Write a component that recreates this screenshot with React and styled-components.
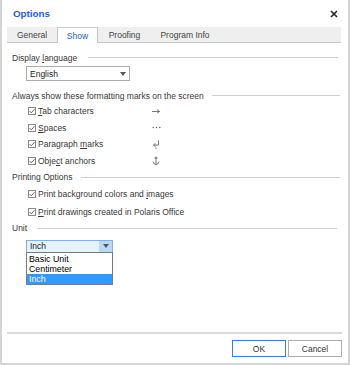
import styled, { createGlobalStyle } from "styled-components"

const Global = createGlobalStyle`
body{
  margin:0;
  background:#fff;
  font-family:"Liberation Sans",Arial,sans-serif;
}
`

const Window = styled.div`
width:350px;
height:365px;
box-sizing:border-box;
background:#fff;
border-left:2px solid #d4d4d4;
border-right:2px solid #d4d4d4;
border-bottom:2px solid #d4d4d4;
display:flex;
flex-direction:column;
color:#383838;
font-size:8.5px;
`
const TitleBar = styled.div`
height:27px;
display:flex;
align-items:center;
justify-content:space-between;
padding:0 10px 0 11px;
`
const Title = styled.span`
color:#1d62c8;
font-weight:bold;
font-size:9.8px;
`
const TabBar = styled.div`
margin:0 7px 0 5px;
height:15px;
background:#efefef;
border-bottom:1px solid #c8c8c8;
display:flex;
align-items:stretch;
`
const Tab = styled.div`
width:${p=>p.w}px;
display:flex;
align-items:center;
justify-content:center;
box-sizing:border-box;
color:${p=>p.active?"#1d62c8":"#444"};
background:${p=>p.active?"#fff":"transparent"};
border:${p=>p.active?"1px solid #c8c8c8":"1px solid transparent"};
border-bottom:none;
margin-bottom:${p=>p.active?"-1px":"0"};
`
const Content = styled.div`
padding:0 8px 0 10px;
display:flex;
flex-direction:column;
`
const Section = styled.div`
display:flex;
align-items:center;
gap:${p=>p.gap}px;
height:17px;
margin-top:${p=>p.top}px;
padding-right:${p=>p.right}px;
`
const Line = styled.div`
flex:1;
border-top:1px solid #cfcfcf;
`
const Select = styled.div`
width:${p=>p.w}px;
height:${p=>p.hover?"13px":"15px"};
box-sizing:border-box;
border:1px solid ${p=>p.hover?"#7eb4ea":"#acacac"};
background:${p=>p.hover?"#e5f1fb":"#fff"};
margin-left:14px;
display:flex;
align-items:center;
justify-content:space-between;
padding-left:3px;
color:#222;
`
const Arrow = styled.div`
width:${p=>p.hover?"13px":"12px"};
height:100%;
display:flex;
align-items:center;
justify-content:center;
background:${p=>p.hover?"#bcd9f4":"transparent"};
&::after{
  content:"";
  border-left:3.5px solid transparent;
  border-right:3.5px solid transparent;
  border-top:4px solid #555;
}
`
const Checks = styled.div`
display:flex;
flex-direction:column;
padding-left:16px;
margin-top:${p=>p.top}px;
gap:${p=>p.gap}px;
`
const CheckRow = styled.div`
display:flex;
align-items:center;
height:12px;
`
const Box = styled.span`
width:8px;
height:8px;
box-sizing:border-box;
border:1px solid #8a8a8a;
margin-right:2px;
display:flex;
align-items:center;
justify-content:center;
`
const Label = styled.span`
width:${p=>p.w?p.w+"px":"auto"};
white-space:nowrap;
`
const Mark = styled.span`
width:12px;
display:flex;
justify-content:center;
`
const Key = styled.span`
text-decoration:underline;
`
const UnitWrap = styled.div`
position:relative;
margin-top:3px;
height:13px;
`
const List = styled.div`
position:absolute;
left:14px;
top:12px;
width:87px;
box-sizing:border-box;
border:1px solid #7a7a7a;
background:#fff;
font-size:8.8px;
color:#000;
padding-top:1px;
`
const Item = styled.div`
height:10px;
line-height:10px;
padding-left:2px;
background:${p=>p.sel?"#3399ff":"transparent"};
color:${p=>p.sel?"#fff":"#000"};
`
const Spacer = styled.div`
flex:1;
`
const Footer = styled.div`
margin:0 6px 0 5px;
border-top:2px solid #dadada;
height:29px;
display:flex;
align-items:center;
justify-content:flex-end;
gap:2px;
`
const Button = styled.div`
width:54px;
height:17px;
box-sizing:border-box;
border:1px solid ${p=>p.primary?"#3c7fd1":"#adadad"};
display:flex;
align-items:center;
justify-content:center;
color:#333;
`

const CloseIcon = () => (
  <svg width="8" height="8" viewBox="0 0 8 8">
    <path d="M1 1 L7 7 M7 1 L1 7" stroke="#222" strokeWidth="1.6"/>
  </svg>
)

const Check = () => (
  <Box>
    <svg width="6" height="6" viewBox="0 0 6 6">
      <path d="M0.5 3 L2.3 4.8 L5.5 1.2" fill="none" stroke="#555" strokeWidth="0.9"/>
    </svg>
  </Box>
)

const TabMark = () => (
  <svg width="8" height="5" viewBox="0 0 8 5">
    <path d="M0 2.5 H7.5 M5 0.7 L7.5 2.5 L5 4.3" fill="none" stroke="#555" strokeWidth="0.8"/>
  </svg>
)
const SpaceMark = () => (
  <svg width="9" height="3" viewBox="0 0 9 3">
    <circle cx="1.2" cy="1.5" r="0.7" fill="#555"/>
    <circle cx="4.5" cy="1.5" r="0.7" fill="#555"/>
    <circle cx="7.8" cy="1.5" r="0.7" fill="#555"/>
  </svg>
)
const ParaMark = () => (
  <svg width="8" height="9" viewBox="0 0 8 9">
    <path d="M6.5 0.5 V5 H1.5 M3.3 3.2 L1.5 5 L3.3 6.8" fill="none" stroke="#555" strokeWidth="0.8"/>
    <circle cx="4" cy="8.2" r="0.6" fill="#555"/>
  </svg>
)
const AnchorMark = () => (
  <svg width="8" height="9" viewBox="0 0 8 9">
    <path d="M4 0.5 V8.5 M2.3 2 H5.7 M1 5.5 Q1.5 8.5 4 8.5 Q6.5 8.5 7 5.5" fill="none" stroke="#555" strokeWidth="0.8"/>
  </svg>
)

const marks = [
  {label:<><Key>T</Key>ab characters</>, mark:<TabMark/>},
  {label:<><Key>S</Key>paces</>, mark:<SpaceMark/>},
  {label:<>Paragraph <Key>m</Key>arks</>, mark:<ParaMark/>},
  {label:<>Obje<Key>c</Key>t anchors</>, mark:<AnchorMark/>},
]

const App = () => {
  return (
    <Window>
      <Global/>
      <TitleBar>
        <Title>Options</Title>
        <CloseIcon/>
      </TitleBar>
      <TabBar>
        <Tab w={50}>General</Tab>
        <Tab w={41} active>Show</Tab>
        <Tab w={53}>Proofing</Tab>
        <Tab w={68}>Program Info</Tab>
      </TabBar>
      <Content>
        <Section top={6} right={2} gap={11}>
          <span>Display <Key>l</Key>anguage</span>
          <Line/>
        </Section>
        <Select w={104}>
          <span>English</span>
          <Arrow/>
        </Select>
        <Section top={6} right={0} gap={8}>
          <span>Always show these formatting marks on the screen</span>
          <Line/>
        </Section>
        <Checks top={1} gap={4.5}>
          {marks.map((m,i)=>(
            <CheckRow key={i}>
              <Check/>
              <Label w={112}>{m.label}</Label>
              <Mark>{m.mark}</Mark>
            </CheckRow>
          ))}
        </Checks>
        <Section top={2} right={0} gap={9}>
          <span>Printing Options</span>
          <Line/>
        </Section>
        <Checks top={2} gap={6}>
          <CheckRow>
            <Check/>
            <Label>Print background colors and <Key>i</Key>mages</Label>
          </CheckRow>
          <CheckRow>
            <Check/>
            <Label><Key>P</Key>rint drawings created in Polaris Office</Label>
          </CheckRow>
        </Checks>
        <Section top={2} right={3} gap={10}>
          <span>Unit</span>
          <Line/>
        </Section>
        <UnitWrap>
          <Select w={87} hover>
            <span>Inch</span>
            <Arrow hover/>
          </Select>
          <List>
            <Item>Basic Unit</Item>
            <Item>Centimeter</Item>
            <Item sel>Inch</Item>
          </List>
        </UnitWrap>
      </Content>
      <Spacer/>
      <Footer>
        <Button primary>OK</Button>
        <Button>Cancel</Button>
      </Footer>
    </Window>
  )
}

export default App
